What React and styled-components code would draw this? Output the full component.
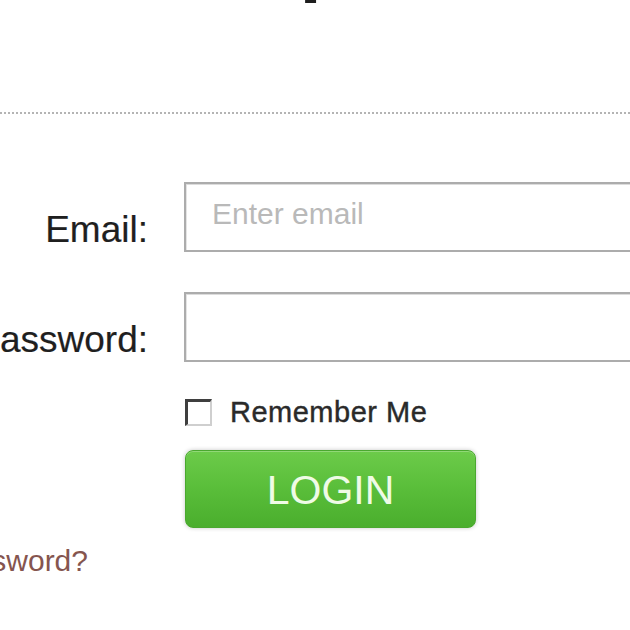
import React from 'react';
import styled, { createGlobalStyle } from 'styled-components';

const GlobalStyle = createGlobalStyle`
  html, body {
    margin: 0;
    padding: 0;
    background: #ffffff;
    overflow: hidden;
  }

  body {
    font-family: "Liberation Sans", Arial, sans-serif;
    color: #222;
  }
`;

const App = () => {
  return (
    <>
      <GlobalStyle />
      <Page>
        <Header>
          <Title>Help</Title>
        </Header>

        <FieldRow $top={68}>
          <Label $pad={4}>Email:</Label>
          <Control>
            <TextInput type="email" placeholder="Enter email" />
          </Control>
        </FieldRow>

        <FieldRow $top={40}>
          <Label $pad={4}>Password:</Label>
          <Control>
            <TextInput type="password" />
          </Control>
        </FieldRow>

        <FieldRow $top={36} $center>
          <Label />
          <Control>
            <RememberLine>
              <CheckBox type="checkbox" />
              <RememberText>Remember Me</RememberText>
            </RememberLine>
          </Control>
        </FieldRow>

        <FieldRow $top={23}>
          <Label />
          <Control>
            <LoginButton type="button">LOGIN</LoginButton>
          </Control>
        </FieldRow>

        <ForgotRow>
          <ForgotLink href="#">Forgot Password?</ForgotLink>
        </ForgotRow>
      </Page>
    </>
  );
};

const Page = styled.div`
  width: 630px;
  height: 630px;
  overflow: hidden;
  background: #ffffff;
`;

const Header = styled.div`
  height: 112px;
  border-bottom: 2px dotted #b4b4b4;
  overflow: hidden;
`;

const Title = styled.h1`
  margin: -81px 0 0;
  padding-left: 175px;
  font-size: 80px;
  line-height: 1;
  font-weight: bold;
  color: #1e1e1e;
  white-space: nowrap;
`;

const FieldRow = styled.div`
  display: flex;
  align-items: ${(p) => (p.$center ? 'center' : 'stretch')};
  margin-top: ${(p) => p.$top}px;
`;

const Label = styled.div`
  flex: 0 0 148px;
  min-width: 0;
  display: flex;
  justify-content: flex-end;
  align-items: flex-end;
  padding-bottom: ${(p) => p.$pad || 0}px;
  font-size: 37px;
  line-height: 1;
  color: #1f1f1f;
  white-space: nowrap;
  -webkit-text-stroke: 0.2px #1f1f1f;
`;

const Control = styled.div`
  flex: 0 0 auto;
  margin-left: 36px;
`;

const TextInput = styled.input`
  box-sizing: border-box;
  width: 520px;
  height: 70px;
  padding: 0 12px 6px 26px;
  border: 2px solid #acacac;
  box-shadow: inset 0 1px 0 #dcdcdc, inset 1px 0 0 #e4e4e4;
  background: #ffffff;
  font-family: "Liberation Sans", Arial, sans-serif;
  font-size: 30px;
  color: #333;
  outline: none;

  &::placeholder {
    color: #b9b9b9;
  }
`;

const RememberLine = styled.label`
  display: flex;
  align-items: center;
  gap: 18px;
`;

const CheckBox = styled.input`
  appearance: none;
  box-sizing: border-box;
  width: 27px;
  height: 27px;
  margin: 0 0 0 1px;
  background: #ffffff;
  border-style: solid;
  border-width: 3px 2px 2px 3px;
  border-color: #3f3f3f #cfcfcf #cfcfcf #3f3f3f;
`;

const RememberText = styled.span`
  font-size: 29px;
  line-height: 1;
  letter-spacing: 0.5px;
  color: #2a2a2a;
  -webkit-text-stroke: 0.4px #2a2a2a;
`;

const LoginButton = styled.button`
  box-sizing: border-box;
  width: 291px;
  height: 78px;
  margin-left: 1px;
  border: 1px solid #4aa82f;
  border-radius: 8px;
  background: linear-gradient(#6ccb4a 0%, #5bbf3b 45%, #4aae2d 100%);
  box-shadow: 0 0 4px rgba(0, 0, 0, 0.22), inset 0 1px 0 rgba(255, 255, 255, 0.25);
  font-family: "Liberation Sans", Arial, sans-serif;
  font-size: 41px;
  line-height: 1;
  padding-top: 4px;
  color: #effbe6;
  cursor: pointer;
`;

const ForgotRow = styled.div`
  width: 88px;
  display: flex;
  justify-content: flex-end;
  margin-top: 18px;
`;

const ForgotLink = styled.a`
  font-size: 30px;
  line-height: 1;
  color: #85554f;
  text-decoration: none;
  white-space: nowrap;
`;

export default App;
